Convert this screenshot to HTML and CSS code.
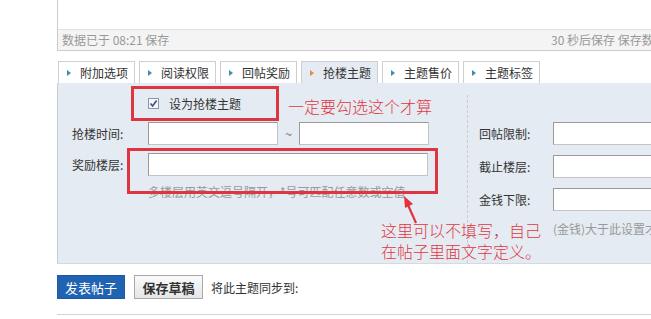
FILE: index.html
```html
<!DOCTYPE html>
<html lang="zh">
<head>
<meta charset="utf-8">
<link rel="stylesheet" href="styles.css">
</head>
<body>
<div class="page">
  <div class="editor">
    <div class="editor-body"></div>
    <div class="statusbar">
      <span>数据已于 08:21 保存</span>
      <span>30 秒后保存 保存数据</span>
    </div>
  </div>

  <ul class="tabs">
    <li class="tab"><span class="tri"></span>附加选项</li>
    <li class="tab"><span class="tri"></span>阅读权限</li>
    <li class="tab"><span class="tri"></span>回帖奖励</li>
    <li class="tab active"><span class="tri"></span>抢楼主题</li>
    <li class="tab"><span class="tri"></span>主题售价</li>
    <li class="tab"><span class="tri"></span>主题标签</li>
  </ul>

  <div class="panel">
    <div class="col-left">
      <div class="check"><span class="cb"><svg width="9" height="9" viewBox="0 0 9 9"><path d="M1.5 4.5 L3.6 7 L7.6 1.5" fill="none" stroke="#3b4f8f" stroke-width="1.6"/></svg></span>设为抢楼主题</div>
      <div class="row"><span class="lbl">抢楼时间:</span><span class="inp short"></span><span class="tilde">~</span><span class="inp short"></span></div>
      <div class="row row2"><span class="lbl">奖励楼层:</span><span class="inp long"></span></div>
      <div class="hint">多楼层用英文逗号隔开，*号可匹配任意数或空值</div>
    </div>
    <div class="col-right">
      <div class="row"><span class="lbl">回帖限制:</span><span class="inp wide"></span></div>
      <div class="row r"><span class="lbl">截止楼层:</span><span class="inp wide"></span></div>
      <div class="row r"><span class="lbl">金钱下限:</span><span class="inp wide"></span></div>
      <div class="hint">(金钱)大于此设置才能参与抢楼</div>
    </div>

    <div class="mark box1"></div>
    <div class="mark box2"></div>
    <div class="note note1">一定要勾选这个才算</div>
    <div class="note note2">这里可以不填写，自己<br>在帖子里面文字定义。</div>
    <svg class="arrow" width="20" height="30" viewBox="0 0 20 30">
      <path d="M15 28 L7 10" stroke="#e2333d" stroke-width="2.2" fill="none"/>
      <path d="M3 1 L12 9 L4 13 Z" fill="#e2333d"/>
    </svg>
  </div>

  <div class="actions">
    <span class="btn primary">发表帖子</span>
    <span class="btn plain">保存草稿</span>
    <span class="sync">将此主题同步到:</span>
  </div>
  <div class="rule"></div>
</div>
</body>
</html>
```

FILE: styles.css
```css
* { box-sizing: border-box; }
html, body { margin: 0; padding: 0; background: #fff; overflow: hidden; }
body {
  font-family: "Noto Sans CJK SC", "Noto Sans", sans-serif;
  font-size: 12px;
  color: #333;
  width: 651px;
  height: 319px;
}
.page { padding-left: 57px; white-space: nowrap; }

.editor { border-left: 1px solid #ccc; border-bottom: 1px solid #ccc; width: 700px; }
.editor-body { height: 29px; background: #fff; }
.statusbar {
  height: 21px;
  background: #f4f4f4;
  border-top: 1px solid #e2e2e2;
  color: #999;
  display: grid;
  grid-template-columns: 489px auto;
  align-items: center;
  padding-left: 4px;
  line-height: 20px;
}

.tabs { list-style: none; margin: 10px 0 0; padding: 0 0 0 1px; display: flex; gap: 4px; height: 22px; }
.tab {
  width: 77px; height: 22px;
  border: 1px solid #cfcfcf; border-bottom: none;
  background: #fff;
  display: flex; align-items: center;
  padding-left: 8px;
  color: #333;
  line-height: 20px;
}
.tab.active { background: #e5ebf2; }
.tri {
  width: 0; height: 0;
  border-top: 3px solid transparent; border-bottom: 3px solid transparent;
  border-left: 4px solid #3a8fb3;
  margin-right: 9px;
}
.tab.active .tri { border-left-color: #e88a3a; }

.panel {
  position: relative;
  height: 181px;
  width: 700px;
  background: #e5ebf2;
  border-left: 1px solid #c9ced4;
  border-bottom: 1px solid #d5dadf;
  display: flex;
}
.col-left { width: 409px; padding: 12px 0 0 14px; }
.col-right {
  border-left: 1px dashed #c8ccd2;
  margin-top: 12px;
  padding: 27px 0 0 11px;
  flex: 1;
}
.check { height: 17px; display: flex; align-items: center; padding-left: 76px; color: #333; }
.cb {
  width: 11px; height: 11px; border: 1px solid #8b96a6; background: #f5f7fb;
  display: inline-flex; align-items: center; justify-content: center; margin-right: 10px;
}
.row { display: flex; align-items: center; height: 23px; margin-top: 10px; }
.row2 { margin-top: 8px; }
.col-right .row { margin-top: 0; }
.col-right .row.r { margin-top: 10px; }
.lbl { width: 76px; color: #333; }
.col-right .lbl { width: 74px; }
.inp {
  display: block; height: 23px; background: #fff;
  border: 1px solid #c4c4c4; border-top-color: #9a9a9a; border-left-color: #9a9a9a;
}
.short { width: 130px; }
.long { width: 280px; }
.wide { width: 160px; }
.tilde { width: 21px; text-align: center; color: #666; }
.hint { color: #999; padding-left: 76px; margin-top: 7px; line-height: 18px; }
.col-right .hint { padding-left: 74px; margin-top: 9px; }

.mark { position: absolute; border: 3px solid #df3540; }
.box1 { left: 73px; top: 3px; width: 148px; height: 35px; }
.box2 { left: 69px; top: 65px; width: 311px; height: 46px; }
.note { position: absolute; color: #e0363f; font-size: 16px; line-height: 21px; font-weight: 300; }
.note1 { left: 230px; top: 13px; }
.note2 { left: 323px; top: 137px; }
.arrow { position: absolute; left: 343px; top: 112px; }

.actions { display: flex; align-items: center; margin-top: 11px; height: 24px; }
.btn { height: 24px; display: inline-flex; align-items: center; justify-content: center; font-size: 13px; }
.primary { width: 68px; background: #2163b3; color: #fff; border: 1px solid #1d5aa3; }
.plain {
  width: 69px; margin-left: 9px; color: #333; font-weight: bold;
  background: linear-gradient(#fafafa, #e6e6e6); border: 1px solid #a9a9a9;
}
.sync { margin-left: 8px; color: #333; }
.rule { margin-top: 15px; border-top: 1px solid #d4d4d4; width: 700px; }
```
